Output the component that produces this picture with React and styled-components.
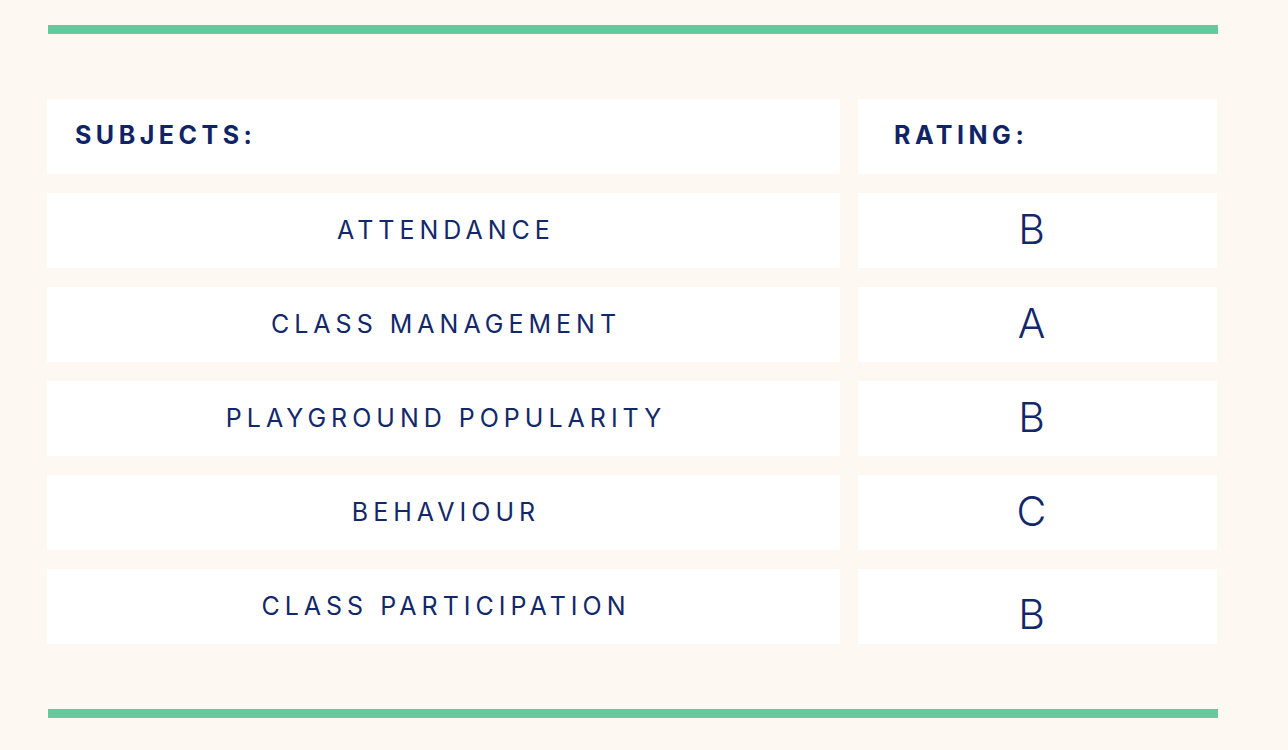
import React from 'react';
import styled, { createGlobalStyle } from 'styled-components';

const GlobalStyle = createGlobalStyle`
  html, body {
    margin: 0;
    padding: 0;
    background: #fdf8f1;
  }
  body {
    font-family: Inter, "Noto Sans", sans-serif;
  }
`;

const Page = styled.div`
  width: 1288px;
  height: 750px;
  padding: 25px 0 0 47px;
  box-sizing: border-box;
  background: #fdf8f1;
`;

const Rule = styled.div`
  width: 1170px;
  height: 9px;
  margin-left: 1px;
  background: #66c99e;
`;

const Table = styled.div`
  display: grid;
  grid-template-columns: 793px 359px;
  grid-auto-rows: 75px;
  column-gap: 18px;
  row-gap: 19px;
  margin: 65px 0 65px;
  width: 1170px;
`;

const HeadCell = styled.div`
  display: flex;
  align-items: center;
  padding-left: ${(p) => p.$indent}px;
  padding-bottom: 3px;
  background: #ffffff;
  color: #0f2466;
  font-size: 25px;
  font-weight: 700;
  letter-spacing: 0.18em;
`;

const SubjectCell = styled.div`
  display: flex;
  align-items: center;
  justify-content: center;
  padding-left: 0.2em;
  padding-bottom: 2px;
  background: #ffffff;
  color: #13286a;
  font-size: 25px;
  font-weight: 400;
  letter-spacing: 0.2em;
`;

const RatingCell = styled.div`
  display: flex;
  align-items: center;
  justify-content: center;
  padding-right: 12px;
  padding-top: ${(p) => p.$drop || 0}px;
  padding-bottom: 3px;
  background: #ffffff;
  color: #13286a;
  font-size: 41px;
  font-weight: 300;
`;

const rows = [
  { subject: 'ATTENDANCE', rating: 'B' },
  { subject: 'CLASS MANAGEMENT', rating: 'A' },
  { subject: 'PLAYGROUND POPULARITY', rating: 'B' },
  { subject: 'BEHAVIOUR', rating: 'C' },
  { subject: 'CLASS PARTICIPATION', rating: 'B', drop: 18 },
];

export default function App() {
  return (
    <Page>
      <GlobalStyle />
      <Rule />
      <Table>
        <HeadCell $indent={28}>SUBJECTS:</HeadCell>
        <HeadCell $indent={36}>RATING:</HeadCell>
        {rows.map((row) => (
          <React.Fragment key={row.subject}>
            <SubjectCell>{row.subject}</SubjectCell>
            <RatingCell $drop={row.drop}>{row.rating}</RatingCell>
          </React.Fragment>
        ))}
      </Table>
      <Rule />
    </Page>
  );
}
